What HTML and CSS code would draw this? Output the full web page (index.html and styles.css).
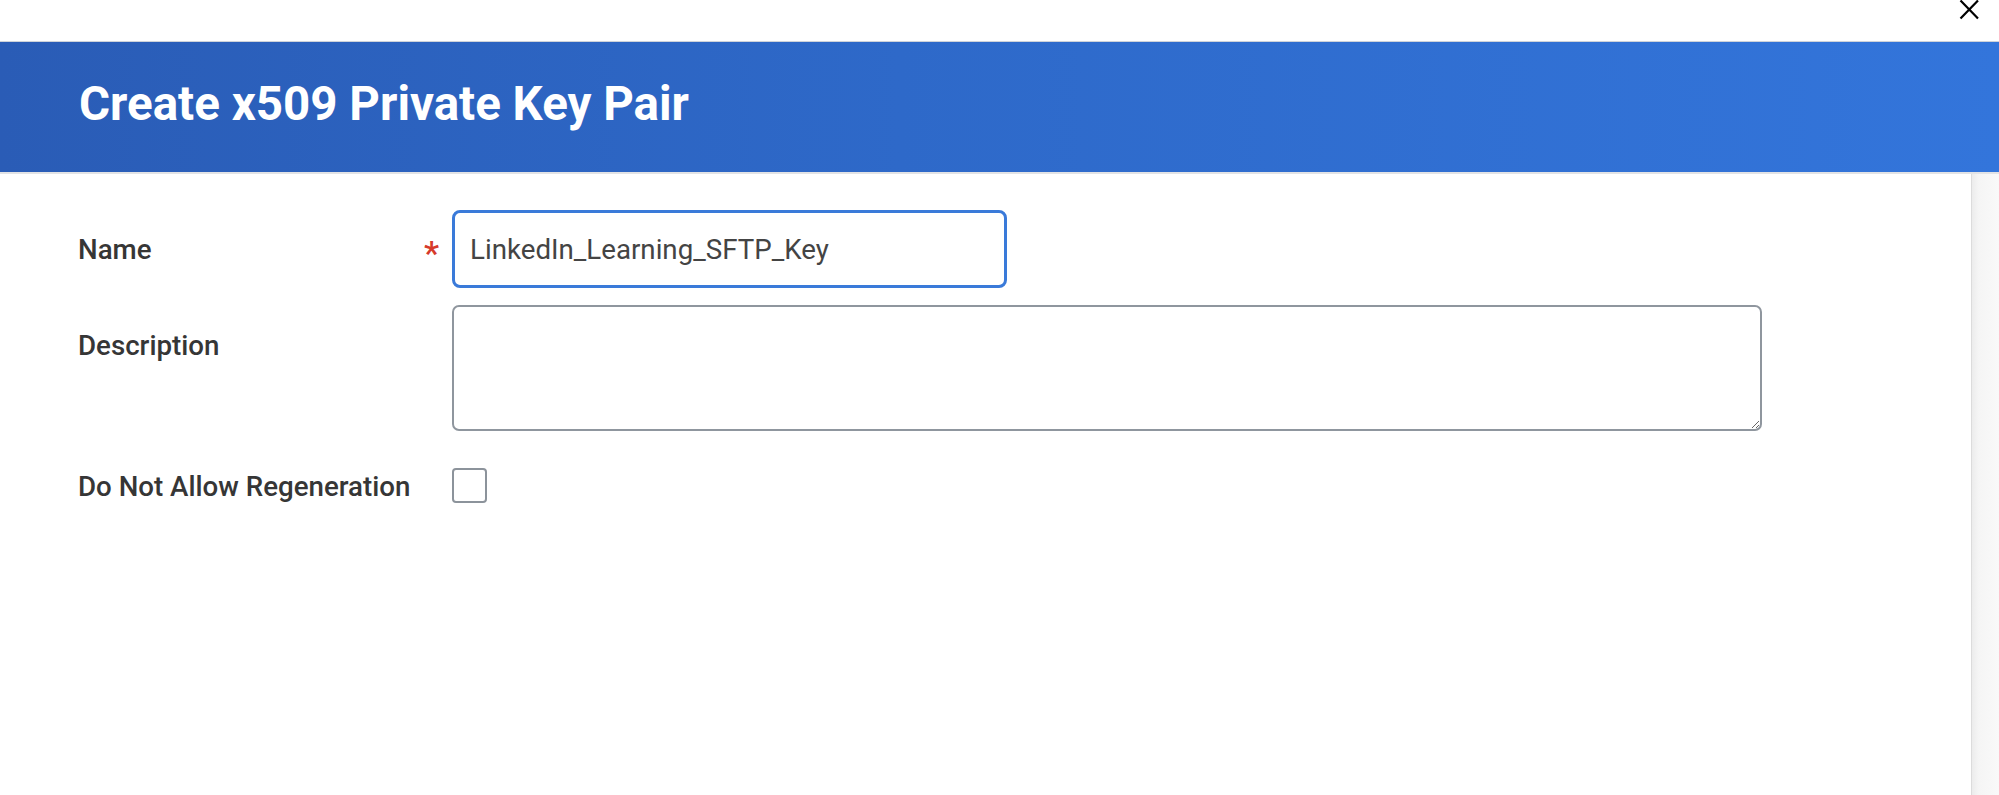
FILE: index.html
```html
<!DOCTYPE html>
<html lang="en">
<head>
<meta charset="utf-8">
<title>Create x509 Private Key Pair</title>
<link rel="stylesheet" href="styles.css">
</head>
<body>
<div class="topbar">
  <button class="close" aria-label="Close">
    <svg width="20" height="20" viewBox="0 0 20 20"><path d="M1.5 0.5 L19 18.5 M19 0.5 L1.5 18.5" stroke="#000" stroke-width="2.2" fill="none"/></svg>
  </button>
</div>
<header class="header">
  <h1 class="title">Create x509 Private Key Pair</h1>
</header>
<div class="main">
  <form class="form">
    <div class="row row-name">
      <label class="label" for="name">Name</label>
      <span class="req">*</span>
      <input class="text-input" id="name" type="text" value="LinkedIn_Learning_SFTP_Key">
    </div>
    <div class="row row-desc">
      <label class="label label-top" for="desc">Description</label>
      <span class="req-empty"></span>
      <textarea class="textarea" id="desc"></textarea>
    </div>
    <div class="row row-check">
      <label class="label" for="regen">Do Not Allow Regeneration</label>
      <span class="req-empty"></span>
      <input class="checkbox" id="regen" type="checkbox">
    </div>
  </form>
  <div class="scrollbar"></div>
</div>
</body>
</html>
```
FILE: styles.css
```css
html, body {
  margin: 0;
  padding: 0;
  background: #fff;
  font-family: Roboto, "Liberation Sans", Arial, sans-serif;
  color: #333;
}
body {
  height: 795px;
  display: flex;
  flex-direction: column;
  overflow: hidden;
}
.topbar {
  height: 41px;
  flex: none;
  display: flex;
  justify-content: flex-end;
  align-items: flex-start;
  padding-right: 20px;
}
.close {
  border: 0;
  background: none;
  padding: 0;
  margin: 0;
  width: 20px;
  height: 20px;
  display: block;
}
.close svg { display: block; }
.header {
  flex: none;
  height: 126px;
  padding-bottom: 4px;
  border-top: 1px solid #cfd3d9;
  border-bottom: 2px solid #e2e3e5;
  background: linear-gradient(to right, #2a5cb6 0%, #2e69c9 45%, #3375db 100%);
  display: flex;
  align-items: center;
  padding-left: 79px;
}
.title {
  margin: 0;
  color: #fff;
  font-size: 47.5px;
  font-weight: 700;
  line-height: 1.17;
}
.main {
  flex: 1;
  display: flex;
}
.form {
  flex: 1;
  padding: 36px 0 0 78px;
  display: flex;
  flex-direction: column;
}
.row {
  display: grid;
  grid-template-columns: 346px 28px auto;
}
.row-name { align-items: center; }
.row-desc { align-items: start; margin-top: 17px; }
.row-check { align-items: center; margin-top: 37px; }
.label {
  font-size: 27.7px;
  font-weight: 500;
  color: #363636;
  line-height: 32px;
  padding-top: 2px;
}
.label-top { padding-top: 25px; }
.req {
  color: #d63a2b;
  font-size: 34px;
  font-weight: 500;
  line-height: 34px;
  padding-top: 8px;
}
.text-input {
  box-sizing: border-box;
  width: 555px;
  height: 78px;
  margin: 0;
  border: 3px solid #3a7ad9;
  border-radius: 8px;
  padding: 0 15px;
  font-family: Roboto, "Liberation Sans", Arial, sans-serif;
  font-size: 27.7px;
  color: #444;
  outline: none;
  background: #fff;
}
.textarea {
  box-sizing: border-box;
  width: 1310px;
  height: 126px;
  margin: 0;
  border: 2px solid #8f969e;
  border-radius: 7px;
  padding: 10px 14px;
  font-family: Roboto, "Liberation Sans", Arial, sans-serif;
  font-size: 28px;
  resize: both;
  outline: none;
  display: block;
}
.checkbox {
  appearance: none;
  -webkit-appearance: none;
  box-sizing: border-box;
  width: 35px;
  height: 35px;
  margin: 0;
  border: 2px solid #8c939b;
  border-radius: 4px;
  background: #fff;
}
.scrollbar {
  width: 27px;
  border-left: 1px solid #dcdcdc;
  background: linear-gradient(to right, #ececec 0%, #f5f5f5 25%, #f9f9f9 100%);
}
```
